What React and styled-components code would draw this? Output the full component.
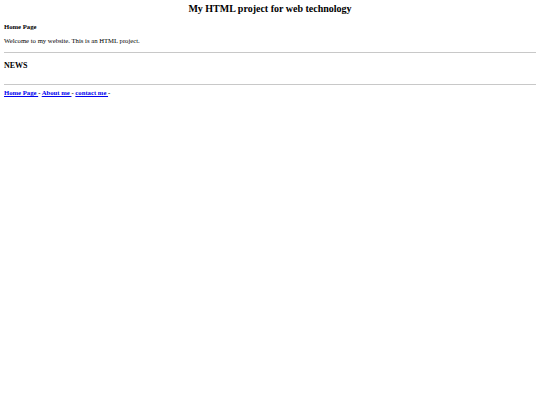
import styled, { createGlobalStyle } from "styled-components";

const GlobalStyle = createGlobalStyle`
  body {
    margin: 0;
    background: #ffffff;
    font-family: "Liberation Serif", "Times New Roman", serif;
    color: #000000;
  }
`;

const Page = styled.div`
  padding: 3px 4px;
  display: flex;
  flex-direction: column;
`;

const Title = styled.h2`
  margin: 0;
  font-size: 10px;
  font-weight: bold;
  text-align: center;
  line-height: 12px;
`;

const SubHeading = styled.h4`
  margin: 7px 0 0;
  font-size: 6.7px;
  font-weight: bold;
  line-height: 9px;
`;

const Text = styled.p`
  margin: 5px 0 0;
  font-size: 6.7px;
  line-height: 9px;
`;

const Rule = styled.hr`
  margin: ${(p) => p.$top}px 0 0;
  border: none;
  border-top: 1px solid #c8c8c8;
  height: 0;
`;

const News = styled.h3`
  margin: 8px 0 0;
  font-size: 8px;
  font-weight: bold;
  line-height: 10px;
`;

const Nav = styled.nav`
  margin-top: 3px;
  font-size: 6.7px;
  font-weight: bold;
  line-height: 9px;
`;

const NavLink = styled.a`
  color: #0000ee;
  text-decoration: underline;
`;

const App = () => {
  const links = ["Home Page ", "About me ", "contact me "];

  return (
    <>
      <GlobalStyle />
      <Page>
        <Title>My HTML project for web technology</Title>
        <SubHeading>Home Page</SubHeading>
        <Text>Welcome to my website. This is an HTML project.</Text>
        <Rule $top={7} />
        <News>NEWS</News>
        <Rule $top={13} />
        <Nav>
          {links.map((label) => (
            <span key={label}>
              <NavLink href="#">{label}</NavLink>-{" "}
            </span>
          ))}
        </Nav>
      </Page>
    </>
  );
};

export default App;
